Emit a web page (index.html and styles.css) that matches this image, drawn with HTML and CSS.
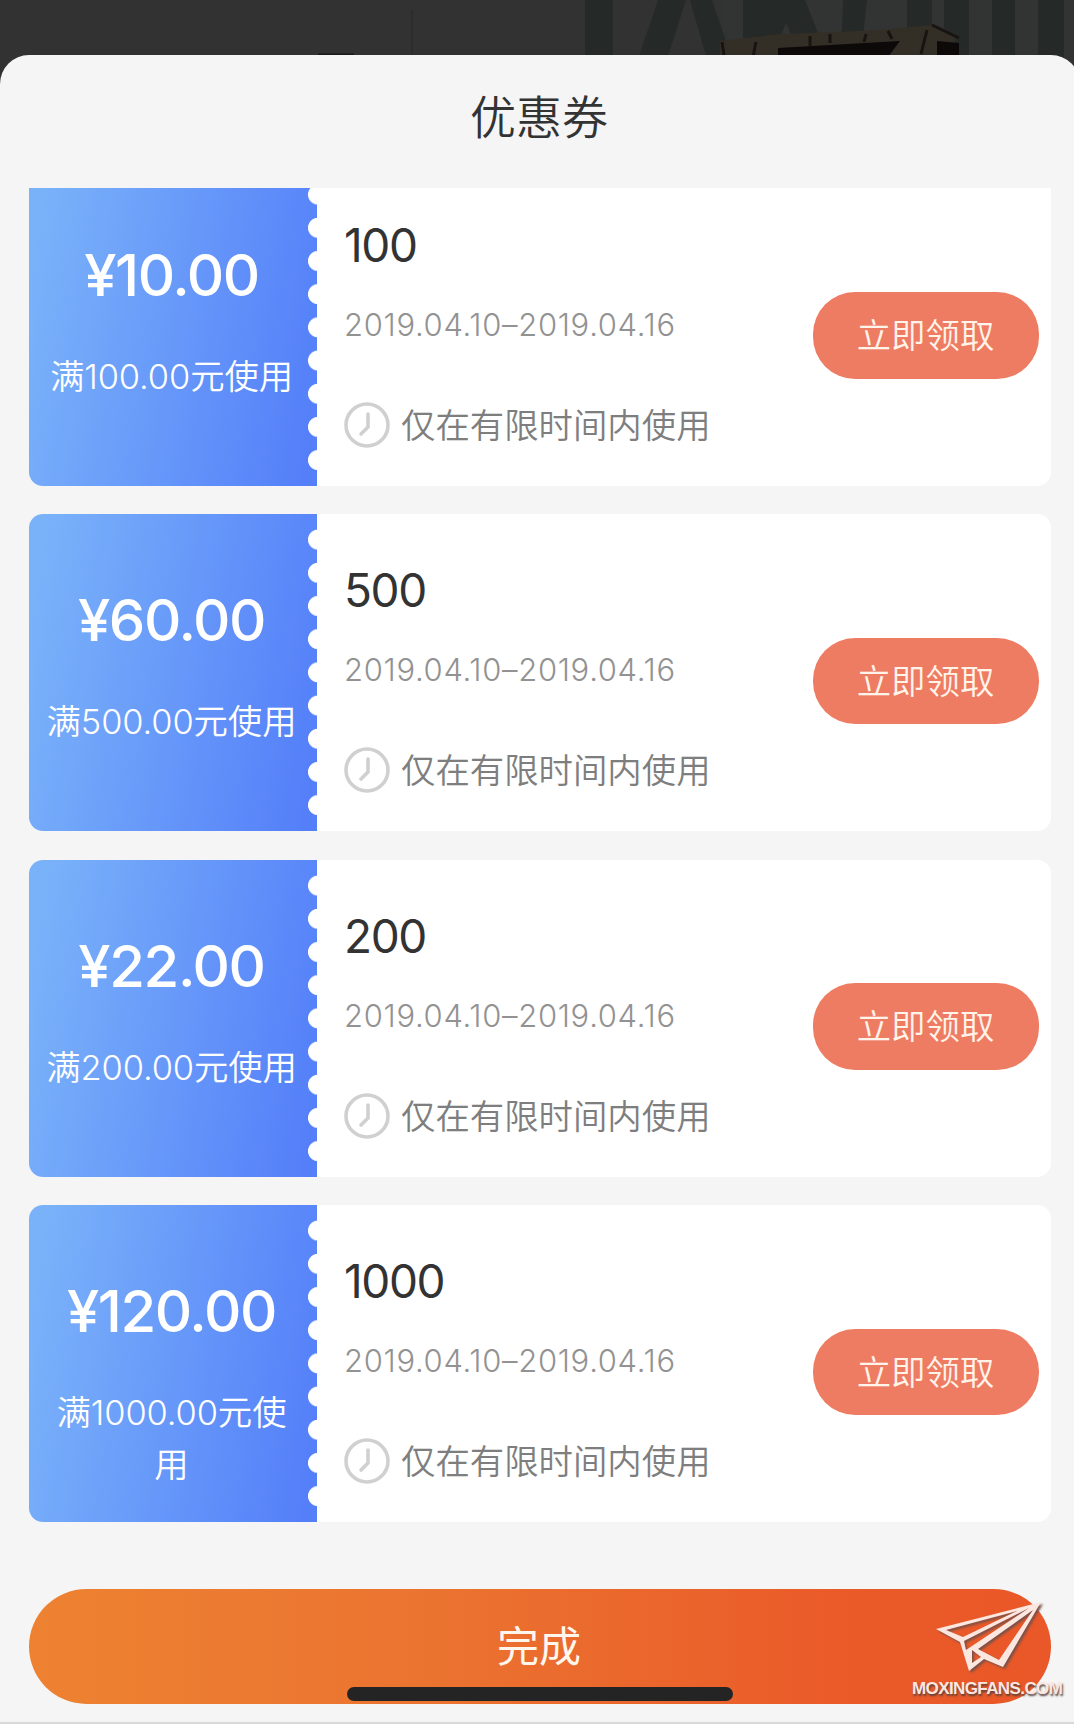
FILE: index.html
```html
<!DOCTYPE html>
<html lang="zh-CN">
<head>
<meta charset="utf-8">
<title>优惠券</title>
<link rel="stylesheet" href="styles.css">
</head>
<body>
<div class="screen">
  <svg class="backdrop" viewBox="0 0 1074 90" aria-hidden="true">
    <rect width="1074" height="90" fill="#323232"/>
    <rect x="722" width="352" height="90" fill="#323433"/>
    <g fill="#252927">
      <path d="M585 0h28v56h-28zM658 0h28l-18 56h-29zM690 0h22l19 56h-25zM743 0h62l22 56h-26l-15-33-14 33h-29zM843 0h24l-6 56h-20zM907 0h25v56h-25zM944 0h25v56h-25zM992 0h23v56h-23zM1038 0h26v90h-26z"/>
    </g>
    <path d="M720 41l60-7 100-4 50-5 24 10 4 22H720z" fill="#332e26"/>
    <path d="M778 48l122-7-12 16H778zM937 41l22 2v14h-22z" fill="#0d0909"/>
    <path d="M722 42l2 13M756 42l-3 15M810 36v10M830 34v9M866 34l-2 8M888 31l4 8M927 30l-6 24M932 25l27 13" fill="none" stroke="#191411" stroke-width="3"/>
    <path d="M318 54.500h36" stroke="#191919" stroke-width="2"/>
    <path d="M412 10v45" stroke="#2c2c2c" stroke-width="2"/>
  </svg>
  <main class="sheet">
    <h1 class="title">优惠券</h1>
    <div class="list">
      <article class="coupon">
        <div class="value"><div class="amount">¥10.00</div><div class="condition">满100.00元使用</div></div>
        <div class="info"><div class="name">100</div><div class="date">2019.04.10–2019.04.16</div>
          <div class="note"><svg class="clock" viewBox="0 0 46 46"><circle cx="23" cy="23" r="21"/><path d="M24 12v13l-7 7"/></svg><span>仅在有限时间内使用</span></div></div>
        <button class="claim">立即领取</button>
      </article>
      <article class="coupon">
        <div class="value"><div class="amount">¥60.00</div><div class="condition">满500.00元使用</div></div>
        <div class="info"><div class="name">500</div><div class="date">2019.04.10–2019.04.16</div>
          <div class="note"><svg class="clock" viewBox="0 0 46 46"><circle cx="23" cy="23" r="21"/><path d="M24 12v13l-7 7"/></svg><span>仅在有限时间内使用</span></div></div>
        <button class="claim">立即领取</button>
      </article>
      <article class="coupon">
        <div class="value"><div class="amount">¥22.00</div><div class="condition">满200.00元使用</div></div>
        <div class="info"><div class="name">200</div><div class="date">2019.04.10–2019.04.16</div>
          <div class="note"><svg class="clock" viewBox="0 0 46 46"><circle cx="23" cy="23" r="21"/><path d="M24 12v13l-7 7"/></svg><span>仅在有限时间内使用</span></div></div>
        <button class="claim">立即领取</button>
      </article>
      <article class="coupon">
        <div class="value"><div class="amount">¥120.00</div><div class="condition">满1000.00元使用</div></div>
        <div class="info"><div class="name">1000</div><div class="date">2019.04.10–2019.04.16</div>
          <div class="note"><svg class="clock" viewBox="0 0 46 46"><circle cx="23" cy="23" r="21"/><path d="M24 12v13l-7 7"/></svg><span>仅在有限时间内使用</span></div></div>
        <button class="claim">立即领取</button>
      </article>
    </div>
    <button class="done">完成</button>
  </main>
  <div class="home-bar"></div>
  <div class="watermark">
    <svg class="plane" viewBox="0 0 106 72"><path fill-rule="evenodd" d="M104 1L-1 28l24 13 9 29 15-12 19 8zM80 10L9 29l17 7zM92 7L27 40l2 9zM96 9L41 48l21 11zM35 49v13l9-6z"/></svg>
    <span class="site">MOXINGFANS.COM</span>
  </div>
</div>
</body>
</html>
```
FILE: styles.css
```css
* { box-sizing: border-box; }
body { margin: 0; background: #323232; font-family: Inter, "Noto Sans CJK SC", sans-serif; }
button { border: 0; padding: 0; font-family: inherit; display: block; }
.screen { position: relative; width: 1074px; height: 1724px; padding-top: 55px; overflow: hidden; }
.backdrop { position: absolute; left: 0; top: 0; width: 1074px; height: 90px; }
.sheet { position: relative; width: 1080px; height: 1669px; padding: 0 29px; background: #f5f5f6; border-radius: 29px 29px 0 0; border-bottom: 2px solid #d9d8da; }
.title { margin: 0; height: 133px; padding-top: 28px; font-size: 46px; line-height: 68px; font-weight: 350; color: #333; text-align: center; text-indent: -2px; }
.list { height: 1334px; display: flex; flex-direction: column; justify-content: flex-end; gap: 28.5px; overflow: hidden; }
.coupon { flex: none; height: 317px; display: flex; background: #fff; border-radius: 14px; overflow: hidden; }
.value { position: relative; width: 288px; padding: 71px 16px 0 13px; color: #fff; text-align: center; background: linear-gradient(100deg, #7ab2f9 5%, #547ff9 96%); }
.value::after { content: ""; position: absolute; right: -11px; top: 9px; width: 20px; height: 300px; background: radial-gradient(circle at center, #fff 9.6px, transparent 10.4px) 0 0 / 20px 33.2px; }
.amount { font-size: 58px; line-height: 70px; font-weight: 540; letter-spacing: -1.4px; }
.condition { margin-top: 41px; font-size: 34.4px; line-height: 52px; font-weight: 350; letter-spacing: -0.1px; }
.info { width: 496px; padding: 48px 0 0 27px; }
.name { font-size: 46px; line-height: 56px; letter-spacing: -1.4px; color: #333; }
.date { margin-top: 32px; font-size: 31px; line-height: 40px; font-weight: 330; letter-spacing: 0.68px; color: #929292; white-space: nowrap; }
.note { display: flex; align-items: center; gap: 11px; margin-top: 54px; height: 52px; font-size: 34.4px; line-height: 52px; font-weight: 350; color: #7e7e7e; white-space: nowrap; }
.note span { padding-top: 2px; }
.clock { width: 46px; height: 46px; fill: none; stroke: #d0d0d0; stroke-width: 3.6; stroke-linecap: round; }
.claim { width: 226px; height: 86.5px; margin-top: 123.5px; border-radius: 42px; background: #ee7c62; color: #fff3ea; font-size: 34.4px; font-weight: 350; line-height: 88px; text-indent: -1px; }
.done { width: 1022px; height: 115px; margin-top: 66.5px; border-radius: 57.5px; color: #fff6ed; font-size: 42px; font-weight: 400; line-height: 115px; text-indent: -2px; background: linear-gradient(90deg, #ed8231, #eb7330 40%, #ea5b29 78%, #ea5728); }
.home-bar { position: absolute; left: 347px; top: 1687px; width: 386px; height: 14px; border-radius: 7px; background: #242424; }
.watermark { position: absolute; left: 912px; top: 1601px; width: 160px; color: #fbe7e0; }
.plane { display: block; width: 106px; height: 72px; margin-left: 25px; fill: #fbe7e0; filter: drop-shadow(2px 2px 1px #7b5148); overflow: visible; }
.site { display: block; margin-top: 7px; font: 700 17px/18px "Liberation Sans", sans-serif; letter-spacing: -0.6px; white-space: nowrap; text-shadow: 1px 2px 2px #55403a; }
```
